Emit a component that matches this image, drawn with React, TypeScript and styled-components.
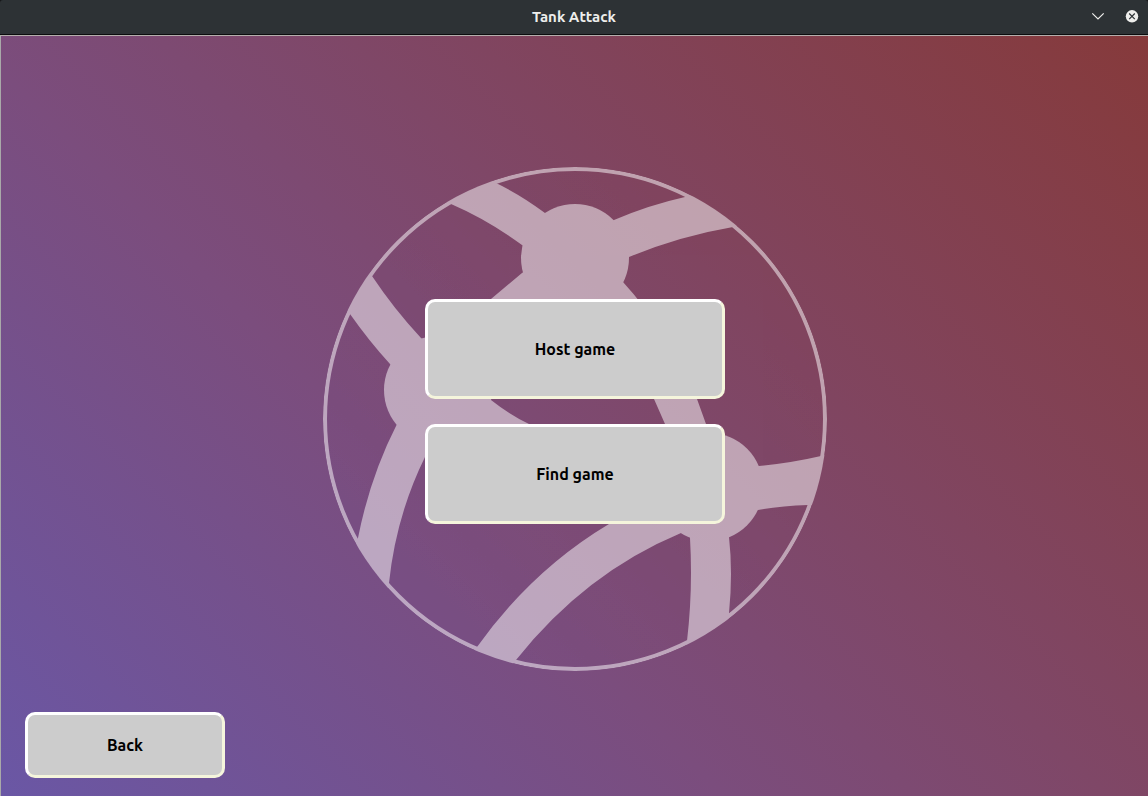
import React from 'react';
import styled, { createGlobalStyle } from 'styled-components';

const GlobalStyle = createGlobalStyle`
  * { box-sizing: border-box; }
  body { margin: 0; font-family: Ubuntu, "Noto Sans", sans-serif; }
`;

const Window = styled.div`
  display: flex;
  flex-direction: column;
  min-height: 100vh;
  background: #151718;
`;

const TitleBar = styled.header`
  display: grid;
  grid-template-columns: 1fr auto 1fr;
  align-items: center;
  height: 35px;
  padding: 0 9px;
  background: #2d3235;
  border-bottom: 1px solid #0c0d0e;
  border-top-left-radius: 3px;
  border-top-right-radius: 3px;
`;

const Title = styled.h1`
  grid-column: 2;
  margin: 0;
  font-size: 15px;
  line-height: 20px;
  font-weight: 700;
  color: #eeeeec;
`;

const WindowControls = styled.div`
  display: flex;
  justify-content: flex-end;
  align-items: center;
  gap: 20px;
`;

const ControlButton = styled.button`
  display: flex;
  padding: 0;
  border: 0;
  background: none;
  cursor: pointer;
`;

const Stage = styled.main`
  flex: 1;
  display: grid;
  grid-template: minmax(0, 1fr) / minmax(0, 1fr);
  place-items: center;
  padding: 6px 0 0 1px;
  border-top: 1px solid #b5aeac;
  border-left: 1px solid #a9a9a9;
  background: linear-gradient(45deg, #6a57a5 0%, #7b4d7d 38%, #7f4767 58%, #863a3b 100%);
`;

const Emblem = styled.svg`
  grid-area: 1 / 1;
  width: 504px;
  max-width: 100%;
`;

const Menu = styled.nav`
  grid-area: 1 / 1;
  display: flex;
  flex-direction: column;
  gap: 25px;
  width: 300px;
  padding-bottom: 15px;
`;

const GameButton = styled.button<{ $tall?: boolean }>`
  width: 100%;
  height: ${(p) => (p.$tall ? 100 : 66)}px;
  border: 3px solid;
  border-color: #fff #f5f5dc #f5f5dc #fff;
  border-radius: 10px;
  background: #ccc;
  color: #000;
  font-family: inherit;
  font-size: 16px;
  line-height: 20px;
  font-weight: 700;
  cursor: pointer;
`;

const BackSlot = styled.div`
  grid-area: 1 / 1;
  place-self: end start;
  width: 200px;
  margin: 0 0 18px 23px;
`;

function NetworkGlobe() {
  return (
    <Emblem viewBox="323 167 504 504" aria-hidden="true">
      <clipPath id="globe">
        <circle cx="575" cy="419" r="252" />
      </clipPath>
      <g clipPath="url(#globe)" opacity="0.5" fill="#fff">
        <circle cx="575" cy="419" r="250" fill="none" stroke="#fff" strokeWidth="4" />
        <circle cx="575" cy="258" r="54" />
        <circle cx="438" cy="390" r="54" />
        <circle cx="709" cy="487" r="54" />
        <path d="M480 175L496 183Q521 195 545 213L575 235L550 262L522 245Q488 220 451 204L435 197Z" />
        <path d="M590 232L614 220Q649 205 685 197L705 192L750 223L733 227Q680 236 629 257L605 267Z" />
        <path d="M545 256L522 273L491 299Q450 335 425 380L460 410Q500 340 560 300Z" />
        <path d="M600 256L623 282Q667 330 697 399L706 424L718 460L680 480L665 424L654 399Q625 335 580 285Z" />
        <path d="M362 260L372 276Q394 309 421 338L440 360L410 384L390 364Q369 341 350 314L340 300Z" />
        <path d="M405 405L397 424Q370 477 358 538L352 560L386 600L389 583Q396 516 425 457L450 410Z" />
        <path d="M455 370L491 400Q510 415 529 424Q590 460 680 470L680 500Q540 490 430 425Z" />
        <path d="M690 485Q640 502 609 524Q532 570 477 647L466 663L504 675L516 660Q585 573 681 533L715 518Z" />
        <path d="M685 500L690 538Q693 590 687 641L683 660L729 640L729 613Q733 573 729 537L725 500Z" />
        <path d="M735 468L759 466Q791 463 821 456L840 450L835 505L808 505Q781 506 758 510L730 515Z" />
      </g>
    </Emblem>
  );
}

export default function App() {
  return (
    <Window>
      <GlobalStyle />
      <TitleBar>
        <Title>Tank Attack</Title>
        <WindowControls>
          <ControlButton type="button" aria-label="Minimize">
            <svg width="14" height="14" viewBox="0 0 14 14" fill="none" stroke="#eeeeec" strokeWidth="1.2">
              <path d="M1.3 3.3L7 9L12.7 3.3" />
            </svg>
          </ControlButton>
          <ControlButton type="button" aria-label="Close">
            <svg width="14" height="14" viewBox="0 0 14 14">
              <circle cx="7" cy="6.3" r="6.2" fill="#eeeeec" />
              <path d="M4.2 3.5L9.8 9.1M9.8 3.5L4.2 9.1" stroke="#2d3235" strokeWidth="1.2" />
            </svg>
          </ControlButton>
        </WindowControls>
      </TitleBar>
      <Stage>
        <NetworkGlobe />
        <Menu aria-label="Multiplayer">
          <GameButton type="button" $tall>Host game</GameButton>
          <GameButton type="button" $tall>Find game</GameButton>
        </Menu>
        <BackSlot>
          <GameButton type="button">Back</GameButton>
        </BackSlot>
      </Stage>
    </Window>
  );
}
